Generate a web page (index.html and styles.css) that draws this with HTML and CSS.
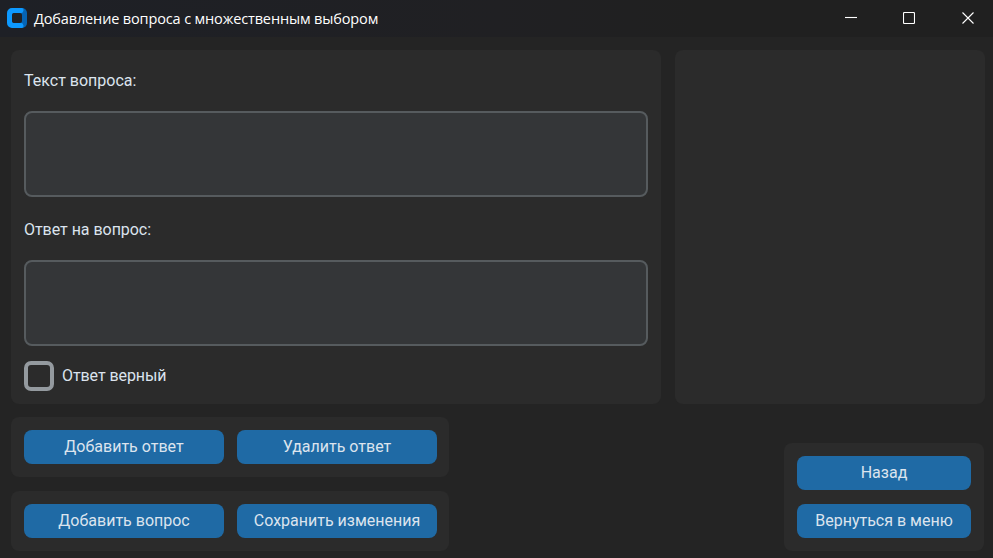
FILE: index.html
```html
<!DOCTYPE html>
<html lang="ru">
<head>
<meta charset="utf-8">
<title>Добавление вопроса с множественным выбором</title>
<link rel="stylesheet" href="styles.css">
</head>
<body>
<header class="titlebar">
  <svg class="logo" width="20" height="20" viewBox="0 0 20 20"><rect x="8" width="12" height="20" rx="5" fill="#0664b4"/><path d="M5 0h10a2 2 0 0 1 1.500 2.500Q16 5 14 5.300H7A1.700 1.700 0 0 0 5.300 7v6A1.700 1.700 0 0 0 7 14.700h7q2 .300 2.500 2.800A2 2 0 0 1 15 20H5a5 5 0 0 1-5-5V5a5 5 0 0 1 5-5z" fill="#0d99ff"/><rect x="5" y="5" width="10" height="10" rx="2" fill="#202124"/></svg>
  <h1 class="title">Добавление вопроса с множественным выбором</h1>
  <div class="controls">
    <svg width="12" height="12" viewBox="0 0 12 12"><path d="M0 5.500h12"/></svg>
    <svg width="12" height="12" viewBox="0 0 12 12"><rect x=".5" y=".5" width="11" height="11" rx="1"/></svg>
    <svg class="close" width="12" height="12" viewBox="0 0 12 12"><path d="M.5.5l11 11M11.500.5l-11 11"/></svg>
  </div>
</header>
<main class="content">
  <section class="left">
    <div class="panel form">
      <label class="label" for="q">Текст вопроса:</label>
      <textarea class="box" id="q"></textarea>
      <label class="label second" for="a">Ответ на вопрос:</label>
      <textarea class="box" id="a"></textarea>
      <div class="check"><span class="checkbox"></span><span class="check-text">Ответ верный</span></div>
    </div>
    <div class="panel actions"><button>Добавить ответ</button><button>Удалить ответ</button></div>
    <div class="panel actions"><button>Добавить вопрос</button><button>Сохранить изменения</button></div>
  </section>
  <aside class="right">
    <div class="panel list"></div>
    <div class="panel nav"><button>Назад</button><button>Вернуться в меню</button></div>
  </aside>
</main>
</body>
</html>
```

FILE: styles.css
```css
* { box-sizing: border-box; }
body { margin: 0; height: 558px; overflow: hidden; background: #242424; color: #dce4ee; font: 16px/20px Roboto, sans-serif; }
.titlebar { height: 37px; display: flex; align-items: center; padding: 0 19px 1px 7px; background: linear-gradient(90deg, #1e2026, #202023 50%, #202020 70%); }
.logo { display: block; }
.title { margin: 0 0 0 7px; padding-top: 2px; font: 400 14.5px/20px "Open Sans", sans-serif; letter-spacing: -0.14px; color: #fff; white-space: nowrap; }
.controls { margin-left: auto; display: flex; gap: 46px; }
.controls svg { display: block; fill: none; stroke: #fff; stroke-width: 1.1; }
.controls .close { margin-left: 1px; }
.content { display: flex; justify-content: space-between; height: 521px; padding: 13px 8px 7px 11px; }
.left { display: flex; flex-direction: column; width: 650px; }
.panel { background: #2b2b2b; border-radius: 8px; }
.form { height: 354px; padding: 21px 13px 13px; }
.label { display: block; height: 20px; }
.second { margin-top: 23px; letter-spacing: -0.04px; }
.box { display: block; width: 624px; height: 86px; margin-top: 20px; border: 2px solid #565b5e; border-radius: 8px; background: #343638; resize: none; outline: none; }
.check { display: flex; align-items: center; gap: 8px; margin-top: 15px; letter-spacing: -0.08px; }
.checkbox { width: 30px; height: 30px; border: 4px solid #949a9f; border-radius: 7px; }
.actions { width: 438px; height: 60px; margin-top: 13px; padding: 13px 12px 13px 13px; display: flex; gap: 13px; }
.actions + .actions { margin-top: 14px; }
button { width: 200px; height: 34px; padding: 0; border: 0; border-radius: 8px; background: #1f6aa5; color: #dce4ee; font: inherit; }
.right { width: 310px; display: flex; flex-direction: column; justify-content: space-between; align-items: flex-end; }
.list { width: 310px; height: 354px; }
.nav { width: 200px; height: 108px; margin-right: 1px; padding: 13px; display: flex; flex-direction: column; gap: 14px; }
.nav button { width: 174px; }
```
